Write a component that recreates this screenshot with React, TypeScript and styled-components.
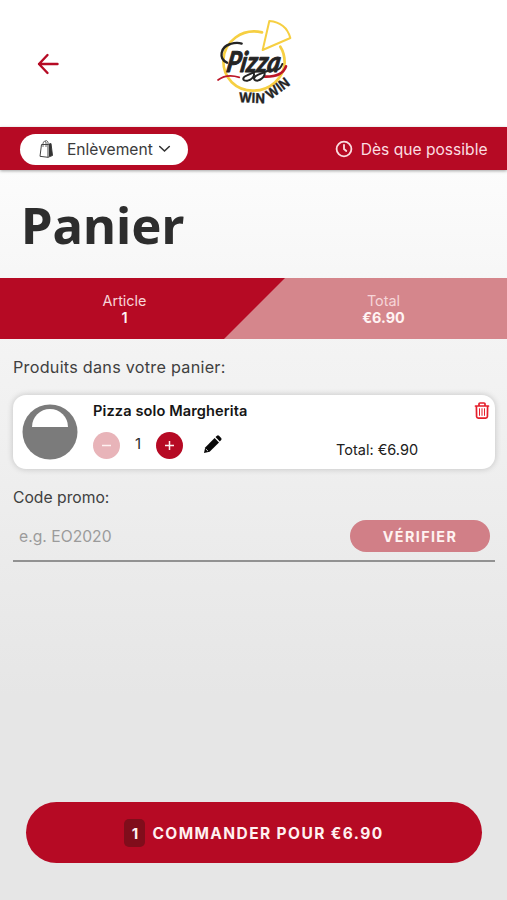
import React from "react";
import styled, { createGlobalStyle } from "styled-components";

const RED = "#b60a24";
const INK = "#2d2d2d";

const GlobalStyle = createGlobalStyle`
  * { box-sizing: border-box; }
  body { margin: 0; font-family: Inter, "Liberation Sans", sans-serif; color: ${INK}; }
  button, input { font-family: inherit; }
  button { border: 0; padding: 0; background: none; color: inherit; }
`;

const Page = styled.div`
  display: flex;
  flex-direction: column;
  height: 900px;
  background: #e6e6e6;
`;

const Header = styled.header`
  display: grid;
  grid-template-columns: 205px 100px 1fr;
  height: 127px;
  padding-top: 10px;
  background: #fff;
`;

const BackButton = styled.button`
  display: flex;
  justify-self: start;
  align-self: start;
  margin: 43px 0 0 37px;
`;

const ServiceBar = styled.div`
  display: flex;
  align-items: center;
  justify-content: space-between;
  height: 43px;
  padding: 1px 19.5px 0 20px;
  background: ${RED};
  box-shadow: 0 1px 3px rgba(0, 0, 0, 0.35);
  z-index: 1;
`;

const ServicePill = styled.button`
  display: flex;
  align-items: center;
  width: 168px;
  height: 31px;
  padding-left: 18px;
  border-radius: 16px;
  background: #fff;
  color: #3b3b3b;
  font-size: 15.6px;

  span { margin: 0 5px 0 11px; }
`;

const Schedule = styled.div`
  display: flex;
  align-items: center;
  gap: 8px;
  color: #fbdde0;
  font-size: 15.6px;
  white-space: nowrap;
`;

const Main = styled.main`
  display: flex;
  flex-direction: column;
  flex: 1;
  background: linear-gradient(#fcfcfc 0, #f4f4f4 22%, #ececec 50%, #e6e6e6 72%);
`;

const Title = styled.h1`
  height: 108px;
  margin: 0;
  padding: 0 0 0 21px;
  font: 700 50.8px/109px "Noto Sans", sans-serif;
`;

const Summary = styled.section`
  position: relative;
  display: grid;
  grid-template-columns: 249px 1fr;
  height: 61px;
  background: #d5868c;

  &::before {
    content: "";
    position: absolute;
    inset: 0;
    background: ${RED};
    clip-path: polygon(0 0, 285px 0, 224px 100%, 0 100%);
  }
`;

const SummaryCell = styled.div<{ $total?: boolean }>`
  position: relative;
  display: flex;
  flex-direction: column;
  align-items: center;
  padding-top: 13.5px;
  padding-left: ${(p) => (p.$total ? "11px" : "0")};
  color: #f6d5d8;
  font-size: 14.4px;
  line-height: 17.5px;

  strong { color: #fff4f3; font-weight: ${(p) => (p.$total ? 700 : 600)}; }
`;

const Content = styled.div`
  display: flex;
  flex-direction: column;
  padding: 16px 12px 0 13px;
`;

const SectionTitle = styled.p`
  height: 24px;
  margin: 0;
  color: #404040;
  font-size: 16.2px;
  line-height: 25px;
  letter-spacing: 0.26px;
`;

const FieldLabel = styled.label`
  display: block;
  height: 24px;
  color: #404040;
  font-size: 15.7px;
  line-height: 25px;
`;

const ProductCard = styled.article`
  display: flex;
  height: 74px;
  margin: 16px 0;
  padding: 0 5px 0 9px;
  border-radius: 13px;
  background: #fff;
  box-shadow: 0 0 6px rgba(0, 0, 0, 0.2);
`;

const Thumbnail = styled.svg`
  flex: none;
  margin: 9px 15px 0 0;
`;

const ProductInfo = styled.div`
  width: 243px;
  padding-top: 6px;
`;

const ProductName = styled.h2`
  margin: 0;
  color: #151515;
  font-size: 14.6px;
  font-weight: 600;
  line-height: 20px;
  letter-spacing: 0.1px;
`;

const Stepper = styled.div`
  display: flex;
  align-items: center;
  margin-top: 10.5px;
`;

const Quantity = styled.span`
  width: 36px;
  text-align: center;
  font-size: 15px;
  line-height: 22px;
  padding-bottom: 2px;
`;

const RoundButton = styled.button<{ $muted?: boolean }>`
  display: flex;
  align-items: center;
  justify-content: center;
  width: 27px;
  height: 27px;
  border-radius: 50%;
  background: ${(p) => (p.$muted ? "#e8b4b9" : RED)};
`;

const EditButton = styled.button`
  display: flex;
  margin: 0 0 2px 21px;
`;

const ProductTotal = styled.div`
  flex: 1;
  padding-top: 45px;
  color: #202020;
  font-size: 14.5px;
  line-height: 20px;
`;

const DeleteButton = styled.button`
  display: flex;
  align-self: flex-start;
  margin-top: 7px;
`;

const PromoRow = styled.div`
  display: flex;
  align-items: center;
  height: 53px;
  padding: 3px 5px 0 6px;
  border-bottom: 2px solid #929292;
`;

const PromoInput = styled.input`
  flex: 1;
  min-width: 0;
  padding: 0;
  border: 0;
  outline: 0;
  background: transparent;
  font-size: 15.7px;
  &::placeholder { color: #9b9b9b; opacity: 1; }
`;

const VerifyButton = styled.button`
  width: 140px;
  height: 32px;
  border-radius: 16px;
  background: #d17f87;
  color: #fff3f1;
  font-size: 14.3px;
  font-weight: 700;
  letter-spacing: 1.4px;
`;

const OrderButton = styled.button`
  display: flex;
  align-items: center;
  justify-content: center;
  gap: 7px;
  height: 61px;
  margin: auto 25px 37px 26px;
  border-radius: 31px;
  background: ${RED};
  color: #fff1f1;
  font-size: 15.5px;
  font-weight: 700;
  letter-spacing: 1.4px;
`;

const CountBadge = styled.span`
  width: 21px;
  height: 28px;
  border-radius: 5px;
  background: #800d1b;
  font-size: 15px;
  line-height: 29px;
  letter-spacing: 0;
  text-align: center;
`;

const OrderText = styled.span`
  padding-top: 2px;
`;

function Logo() {
  return (
    <svg width="100" height="105" viewBox="0 0 300 315" fill="none" strokeLinecap="round" strokeLinejoin="round">
      <g stroke="#f6cf42" strokeWidth="8">
        <path d="M171 67C112 53 57 94 55 151C54 205 94 242 143 242C196 242 236 204 239 158Q239 130 226 110" />
        <path d="M173 120L193 33Q243 37 256 84Z" strokeWidth="6" />
      </g>
      <g stroke="#bd1728" strokeWidth="8">
        <path d="M39 210Q65 190 103 202" strokeWidth="5" />
        <path d="M180 200Q232 201 243 169" />
      </g>
      <g stroke="#242424">
        <path d="M66 158C40 146 46 110 76 102Q96 96 110 101" strokeWidth="7" />
        <path d="M138 183C154 186 148 206 128 212C110 214 111 202 126 196L153 184M172 183C186 187 178 205 158 212C142 212 145 200 160 194L187 183M212 179Q224 182 232 162" strokeWidth="6" />
      </g>
      <text x="60" y="185" transform="translate(34 0) skewX(-10)" fill="#242424" stroke="#242424" strokeWidth="3" fontFamily="Lato, sans-serif" fontStyle="italic" fontWeight="700" fontSize="86" textLength="160" lengthAdjust="spacingAndGlyphs">Pizza</text>
      <g fill="#242424" stroke="#242424" strokeWidth="1" fontFamily="Inter, sans-serif" fontWeight="700" fontSize="41">
        <text transform="translate(101 277) rotate(2)" textLength="78" lengthAdjust="spacingAndGlyphs">WIN</text>
        <text transform="translate(196 270) rotate(-37)" textLength="77" lengthAdjust="spacingAndGlyphs">WIN</text>
      </g>
    </svg>
  );
}

const BackIcon = () => (
  <svg width="22" height="22" viewBox="0 0 22 22" fill="none" stroke={RED} strokeWidth="2.4" strokeLinecap="round" strokeLinejoin="round">
    <path d="M20.5 11H2M10.5 2L2 11L10.5 20" />
  </svg>
);

const BagIcon = () => (
  <svg width="18" height="20" viewBox="0 0 18 20" fill="none" stroke="#444" strokeWidth="1">
    <path d="M3.5 5.5L2 17.3L10 18.3V5.5ZM10 5.5L13 4.5L14.5 16.5L10 18.3" />
    <path d="M11 5L13 4.5L14.5 16.5L11 17.5Z" fill="#333" stroke="none" />
    <path d="M5 8V4Q6 .8 8 3V8M7 2Q9 .8 10 3V5" strokeWidth=".8" />
  </svg>
);

const ClockIcon = () => (
  <svg width="18" height="18" viewBox="0 0 18 18" fill="none" stroke="#fbdde0" strokeWidth="1.8" strokeLinecap="round">
    <circle cx="9" cy="9" r="7.4" /><path d="M9 4.8V9L11.3 11" />
  </svg>
);

const PencilIcon = () => (
  <svg width="18" height="18" viewBox="0 0 18 18" fill="#080808">
    <path d="M0 18L1.2 12.4L10.6 3L15 7.4L5.6 16.8Z" />
    <path d="M11.5 2.1L13 .7Q14 0 15 .8L17.2 3Q18 4 17.2 5L15.8 6.5Z" />
    <path d="M1.8 14L4 16.1" stroke="#fff" strokeWidth=".8" />
  </svg>
);

const TrashIcon = () => (
  <svg width="16" height="18" viewBox="0 0 16 18" fill="none" stroke="#e51f2b" strokeWidth="1.7" strokeLinecap="round">
    <path d="M1.5 4H14.5M5 3.7V1.8Q5 1 6 1H10Q11 1 11 1.8V3.7M2.4 4.5L2.6 14.7Q2.8 16.1 4.2 16.1H11.8Q13.2 16.1 13.4 14.7L13.6 4.5" />
    <path d="M5.5 6.7V13.4M8 6.7V13.4M10.5 6.7V13.4" strokeWidth="1" />
  </svg>
);

const SignIcon = ({ plus = false }: { plus?: boolean }) => (
  <svg width="9" height="9" viewBox="0 0 9 9" stroke="#fff1f1" strokeWidth="1.5">
    <path d={plus ? "M0 4.5H9M4.5 0V9" : "M0 4.5H9"} />
  </svg>
);

export default function App() {
  return (
    <>
      <GlobalStyle />
      <Page>
        <Header>
          <BackButton aria-label="Retour"><BackIcon /></BackButton>
          <Logo />
        </Header>
        <ServiceBar>
          <ServicePill>
            <BagIcon />
            <span>Enlèvement</span>
            <svg width="13" height="8" viewBox="0 0 13 8" fill="none" stroke="#333" strokeWidth="1.6" strokeLinecap="round"><path d="M1.7 1.5L6.5 6L11.3 1.5" /></svg>
          </ServicePill>
          <Schedule><ClockIcon /><span>Dès que possible</span></Schedule>
        </ServiceBar>
        <Main>
          <Title>Panier</Title>
          <Summary>
            <SummaryCell><span>Article</span><strong>1</strong></SummaryCell>
            <SummaryCell $total><span>Total</span><strong>€6.90</strong></SummaryCell>
          </Summary>
          <Content>
            <SectionTitle>Produits dans votre panier:</SectionTitle>
            <ProductCard>
              <Thumbnail width="56" height="56" viewBox="0 0 56 56">
                <circle cx="28" cy="28" r="27.5" fill="#7b7b7b" />
                <path d="M10 23A18 18 0 0 1 46 23Z" fill="#fff" />
              </Thumbnail>
              <ProductInfo>
                <ProductName>Pizza solo Margherita</ProductName>
                <Stepper>
                  <RoundButton $muted aria-label="Retirer"><SignIcon /></RoundButton>
                  <Quantity>1</Quantity>
                  <RoundButton aria-label="Ajouter"><SignIcon plus /></RoundButton>
                  <EditButton aria-label="Modifier"><PencilIcon /></EditButton>
                </Stepper>
              </ProductInfo>
              <ProductTotal>Total: €6.90</ProductTotal>
              <DeleteButton aria-label="Supprimer"><TrashIcon /></DeleteButton>
            </ProductCard>
            <FieldLabel htmlFor="promo">Code promo:</FieldLabel>
            <PromoRow>
              <PromoInput id="promo" placeholder="e.g. EO2020" />
              <VerifyButton>VÉRIFIER</VerifyButton>
            </PromoRow>
          </Content>
          <OrderButton><CountBadge>1</CountBadge><OrderText>COMMANDER POUR €6.90</OrderText></OrderButton>
        </Main>
      </Page>
    </>
  );
}
